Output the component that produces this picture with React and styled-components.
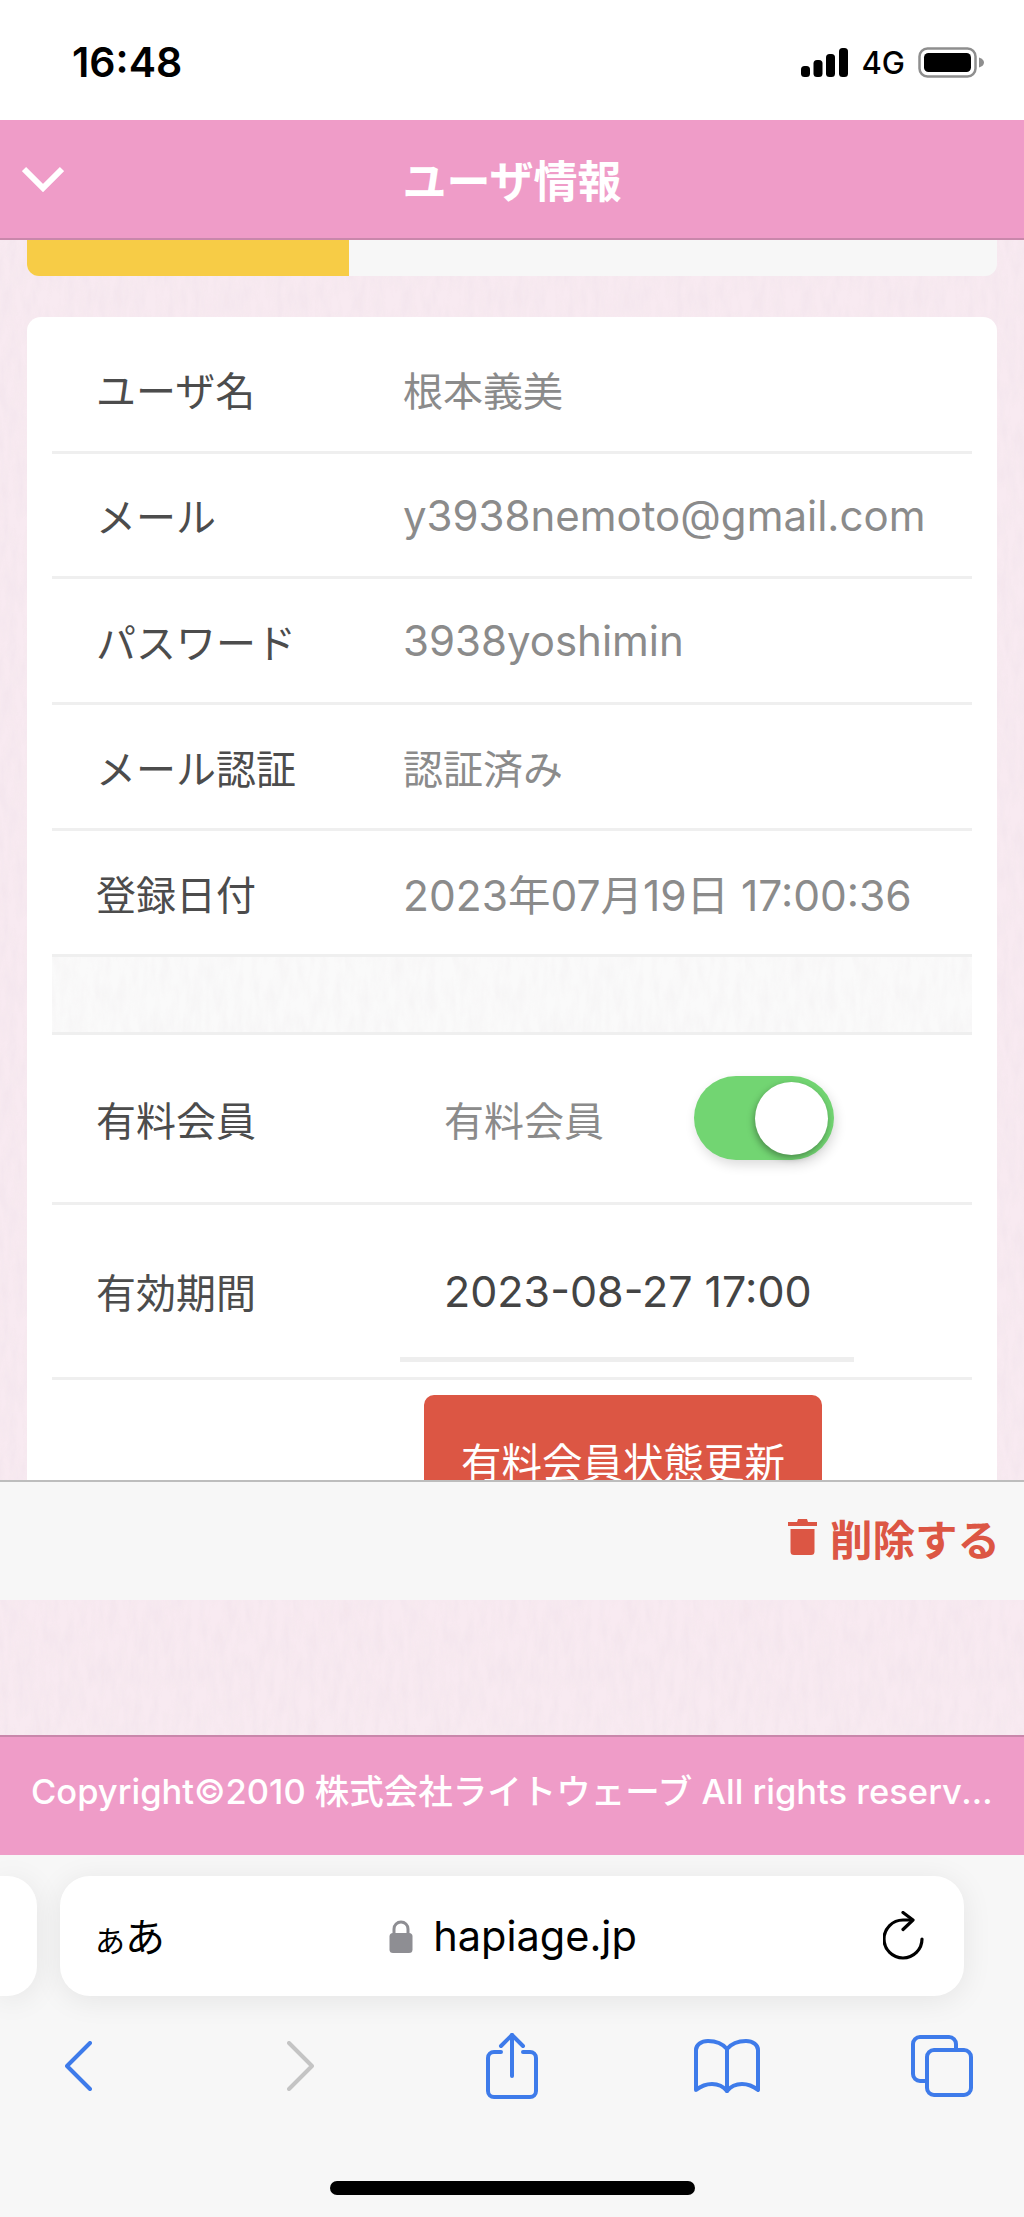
import React from "react";
import styled, { createGlobalStyle } from "styled-components";

const paper = (base, strength) => {
  const svg = `<svg xmlns='http://www.w3.org/2000/svg' width='400' height='400'><filter id='n' x='0' y='0' width='100%' height='100%'><feTurbulence type='fractalNoise' baseFrequency='0.12 0.035' numOctaves='4' seed='7' stitchTiles='stitch'/><feColorMatrix values='0 0 0 0 0.6 0 0 0 0 0.5 0 0 0 0 0.55 0 0 0 0.5 -0.16'/></filter><rect width='400' height='400' fill='${base}'/><rect width='400' height='400' filter='url(#n)' opacity='${strength}'/></svg>`;
  return `url("data:image/svg+xml,${encodeURIComponent(svg)}")`;
};

const GlobalStyle = createGlobalStyle`
  html, body {
    margin: 0;
    padding: 0;
    background: #fff;
  }
  * {
    box-sizing: border-box;
  }
`;

const Screen = styled.div`
  width: 1024px;
  height: 2217px;
  display: flex;
  flex-direction: column;
  overflow: hidden;
  font-family: Inter, "Noto Sans CJK JP", sans-serif;
  background: #f7e9f0 ${paper("#f8eaf1", 0.3)};
`;

const StatusBar = styled.div`
  height: 120px;
  flex: none;
  background: #fff;
  display: flex;
  justify-content: space-between;
  align-items: flex-start;
  padding: 47px 39px 0 72px;
`;

const Clock = styled.div`
  font-weight: 600;
  font-size: 41px;
  line-height: 30px;
  color: #000;
`;

const StatusIcons = styled.div`
  display: flex;
  align-items: center;
  height: 30px;
`;

const Network = styled.span`
  font-size: 31px;
  font-weight: 500;
  line-height: 30px;
  color: #000;
  margin: 2px 13px 0 13px;
`;

const PinkBar = styled.div`
  height: 120px;
  flex: none;
  background: #ef9cc8;
  color: #fff;
  display: flex;
  align-items: center;
`;

const Header = styled(PinkBar)`
  position: relative;
  justify-content: center;
  border-bottom: 2px solid #c987ab;
  font-size: 44px;
  font-weight: 700;
`;

const BackButton = styled.svg`
  position: absolute;
  left: 22px;
  top: 46px;
`;

const Content = styled.div`
  flex: 1;
  min-height: 0;
  overflow: hidden;
  padding: 0 27px;
`;

const Progress = styled.div`
  height: 36px;
  background: #f7f7f7;
  border-radius: 0 0 12px 12px;
  overflow: hidden;
  margin-bottom: 41px;
`;

const ProgressFill = styled.div`
  height: 100%;
  width: ${(p) => p.$percent}%;
  background: #f7cc46;
`;

const Card = styled.div`
  background: #fff;
  border-radius: 14px 14px 0 0;
  padding: 0 25px 60px;
`;

const Row = styled.div`
  height: ${(p) => p.$height}px;
  display: flex;
  align-items: center;
  padding-left: 44px;
  padding-top: ${(p) => p.$top || 0}px;
  border-bottom: 3px solid #efefef;
  font-size: 40px;
  white-space: nowrap;
`;

const Label = styled.div`
  width: 307px;
  flex: none;
  color: #4c4c4c;
`;

const Value = styled.div`
  color: #8b8b8b;
  font-size: ${(p) => p.$size || 40}px;
`;

const Band = styled.div`
  height: 78px;
  border-bottom: 3px solid #efefef;
  background: #f8f7f7 ${paper("#fafafa", 0.25)};
`;

const MemberLabel = styled(Value)`
  margin-left: 41px;
`;

const Toggle = styled.div`
  position: relative;
  width: 140px;
  height: 84px;
  margin: -2px 0 0 90px;
  border-radius: 42px;
  background: #72d572;
  box-shadow: 2px 5px 12px rgba(0, 0, 0, 0.14);
`;

const Knob = styled.div`
  position: absolute;
  top: 6px;
  right: 6px;
  width: 73px;
  height: 73px;
  border-radius: 50%;
  background: #fff;
  box-shadow: -1px 3px 7px rgba(0, 0, 0, 0.35);
`;

const DateField = styled.div`
  position: relative;
  margin-left: 41px;
  color: #444;
  font-size: 43px;
`;

const Underline = styled.div`
  position: absolute;
  left: -44px;
  top: 92px;
  width: 454px;
  height: 5px;
  background: #eeeeee;
`;

const UpdateButton = styled.button`
  display: block;
  width: 398px;
  height: 130px;
  margin: 15px 0 0 372px;
  padding: 0;
  border: 0;
  border-radius: 10px;
  background: #dc5644;
  color: #fff;
  font-family: inherit;
  font-size: 40.5px;
  white-space: nowrap;
`;

const ActionBar = styled.div`
  height: 120px;
  flex: none;
  background: #f7f7f7;
  border-top: 2px solid #bdbdbd;
  display: flex;
  justify-content: flex-end;
  align-items: center;
  gap: 13px;
  padding: 0 24px 8px 0;
  color: #dc5644;
  font-size: 42.5px;
  font-weight: 700;
`;

const Spacer = styled.div`
  height: 135px;
  flex: none;
`;

const Footer = styled(PinkBar)`
  border-top: 2px solid #c987ab;
  padding: 0 24px 14px 31px;
  font-size: 34.5px;
  font-weight: 500;
`;

const FooterText = styled.div`
  min-width: 0;
  overflow: hidden;
  white-space: nowrap;
  text-overflow: ellipsis;
`;

const Safari = styled.div`
  height: 362px;
  flex: none;
  background: #f7f7f7;
  display: flex;
  flex-direction: column;
  padding-top: 21px;
`;

const TabRow = styled.div`
  display: flex;
  gap: 23px;
  height: 120px;
  flex: none;
`;

const PrevTab = styled.div`
  width: 37px;
  flex: none;
  background: #fff;
  border-radius: 0 30px 30px 0;
  box-shadow: 0 4px 30px rgba(0, 0, 0, 0.08);
`;

const UrlBar = styled.div`
  width: 904px;
  flex: none;
  background: #fff;
  border-radius: 30px;
  box-shadow: 0 4px 30px rgba(0, 0, 0, 0.08);
  display: flex;
  align-items: center;
  justify-content: space-between;
  padding: 0 39px 0 35px;
  color: #000;
`;

const TextSize = styled.div`
  font-family: "Noto Sans CJK JP", sans-serif;
  font-size: 40px;
  line-height: 44px;
  margin-top: 2px;

  span {
    font-size: 30px;
  }
`;

const Domain = styled.div`
  display: flex;
  align-items: center;
  gap: 20px;
  font-size: 41.5px;
  margin-right: 22px;
`;

const Toolbar = styled.div`
  display: grid;
  grid-template-columns: 156px 288px 136px 294px 136px;
  height: 99px;
  margin-top: 20px;
  flex: none;
  align-items: center;
  justify-items: center;
`;

const HomeIndicator = styled.div`
  width: 365px;
  height: 14px;
  margin: 66px auto 0;
  border-radius: 7px;
  background: #000;
  flex: none;
`;

const SignalIcon = () => (
  <svg width="47" height="29" viewBox="0 0 47 29">
    <rect x="0" y="18" width="9" height="11" rx="3.5" />
    <rect x="12.5" y="12" width="9" height="17" rx="3.5" />
    <rect x="25" y="6" width="9" height="23" rx="3.5" />
    <rect x="38" y="0" width="9" height="29" rx="3.5" />
  </svg>
);

const BatteryIcon = () => (
  <svg width="67" height="31" viewBox="0 0 67 31">
    <rect x="1.5" y="1.5" width="56" height="28" rx="8" fill="none" stroke="#8e8e8e" strokeWidth="2.5" />
    <rect x="6" y="6" width="47" height="19" rx="4.5" fill="#000" />
    <path d="M61 10.5c3.5 1 5 3 5 5s-1.500 4-5 5z" fill="#8e8e8e" />
  </svg>
);

const TrashIcon = () => (
  <svg width="29" height="36" viewBox="0 0 29 36" fill="#dc5644">
    <path d="M10 0h9l1 3h9v4H0V3h9z" />
    <path d="M2.500 10h24v22.500a3.500 3.500 0 0 1-3.500 3.500H6a3.500 3.500 0 0 1-3.500-3.500z" />
  </svg>
);

const LockIcon = () => (
  <svg width="24" height="33" viewBox="0 0 24 33">
    <path d="M5 15V9a7 7 0 0 1 14 0v6" fill="none" stroke="#8e8e93" strokeWidth="3" />
    <rect x="0.500" y="13" width="23" height="20" rx="3.500" fill="#8e8e93" />
  </svg>
);

const ReloadIcon = () => (
  <svg width="42" height="50" viewBox="0 0 42 50" fill="none" stroke="#000" strokeWidth="3.2" strokeLinecap="round" strokeLinejoin="round">
    <path d="M39 28a19 19 0 1 1-19-19h9" />
    <path d="M20 1.500l10 7.500-10 9.500" />
  </svg>
);

const Chevron = ({ flip, color }) => (
  <svg width="27" height="50" viewBox="0 0 27 50" fill="none" stroke={color} strokeWidth="4" strokeLinecap="round" strokeLinejoin="round">
    <path d={flip ? "M2 2l23 23L2 48" : "M25 2L2 25l23 23"} />
  </svg>
);

const ShareIcon = () => (
  <svg width="52" height="66" viewBox="0 0 52 66" fill="none" stroke="#3e7bea" strokeWidth="4" strokeLinecap="round" strokeLinejoin="round">
    <path d="M15 19H8a6 6 0 0 0-6 6v33a6 6 0 0 0 6 6h36a6 6 0 0 0 6-6V25a6 6 0 0 0-6-6h-7" />
    <path d="M26 43V2" />
    <path d="M15 13L26 2l11 11" />
  </svg>
);

const BookIcon = () => (
  <svg width="66" height="54" viewBox="0 0 66 54" fill="none" stroke="#3e7bea" strokeWidth="4" strokeLinecap="round" strokeLinejoin="round">
    <path d="M33 10C28 4 20 2 14 2 7 2 2 6 2 11v40c5-4 10-6 16-6 6 0 11 2 15 7 4-5 9-7 15-7 6 0 11 2 16 6V11c0-5-5-9-12-9-6 0-14 2-19 8z" />
    <path d="M33 10v42" />
  </svg>
);

const TabsIcon = () => (
  <svg width="62" height="62" viewBox="0 0 62 62" fill="none" stroke="#3e7bea" strokeWidth="4" strokeLinejoin="round">
    <path d="M16 46H9a7 7 0 0 1-7-7V9a7 7 0 0 1 7-7h29a7 7 0 0 1 7 7v6" />
    <rect x="16" y="15" width="44" height="45" rx="7" />
  </svg>
);

const accountRows = [
  { label: "ユーザ名", value: "根本義美", height: 137, top: 10 },
  { label: "メール", value: "y3938nemoto@gmail.com", height: 125, size: 42 },
  { label: "パスワード", value: "3938yoshimin", height: 126, size: 42 },
  { label: "メール認証", value: "認証済み", height: 126 },
  { label: "登録日付", value: "2023年07月19日 17:00:36", height: 126, size: 42.5 },
];

const App = () => {
  return (
    <Screen>
      <GlobalStyle />
      <StatusBar>
        <Clock>16:48</Clock>
        <StatusIcons>
          <SignalIcon />
          <Network>4G</Network>
          <BatteryIcon />
        </StatusIcons>
      </StatusBar>

      <Header>
        <BackButton width="42" height="26" viewBox="0 0 42 26" fill="none" stroke="#fff" strokeWidth="6">
          <path d="M2 3l19 19L40 3" />
        </BackButton>
        ユーザ情報
      </Header>

      <Content>
        <Progress>
          <ProgressFill $percent={33.2} />
        </Progress>
        <Card>
          {accountRows.map((row) => (
            <Row key={row.label} $height={row.height} $top={row.top}>
              <Label>{row.label}</Label>
              <Value $size={row.size}>{row.value}</Value>
            </Row>
          ))}
          <Band />
          <Row $height={170}>
            <Label>有料会員</Label>
            <MemberLabel>有料会員</MemberLabel>
            <Toggle>
              <Knob />
            </Toggle>
          </Row>
          <Row $height={175}>
            <Label>有効期間</Label>
            <DateField>
              2023-08-27 17:00
              <Underline />
            </DateField>
          </Row>
          <UpdateButton>有料会員状態更新</UpdateButton>
        </Card>
      </Content>

      <ActionBar>
        <TrashIcon />
        削除する
      </ActionBar>
      <Spacer />
      <Footer>
        <FooterText>Copyright©2010 株式会社ライトウェーブ All rights reserved.</FooterText>
      </Footer>

      <Safari>
        <TabRow>
          <PrevTab />
          <UrlBar>
            <TextSize>
              <span>あ</span>あ
            </TextSize>
            <Domain>
              <LockIcon />
              hapiage.jp
            </Domain>
            <ReloadIcon />
          </UrlBar>
        </TabRow>
        <Toolbar>
          <Chevron color="#3e7bea" />
          <Chevron flip color="#c4c4c4" />
          <ShareIcon />
          <BookIcon />
          <TabsIcon />
        </Toolbar>
        <HomeIndicator />
      </Safari>
    </Screen>
  );
};

export default App;
